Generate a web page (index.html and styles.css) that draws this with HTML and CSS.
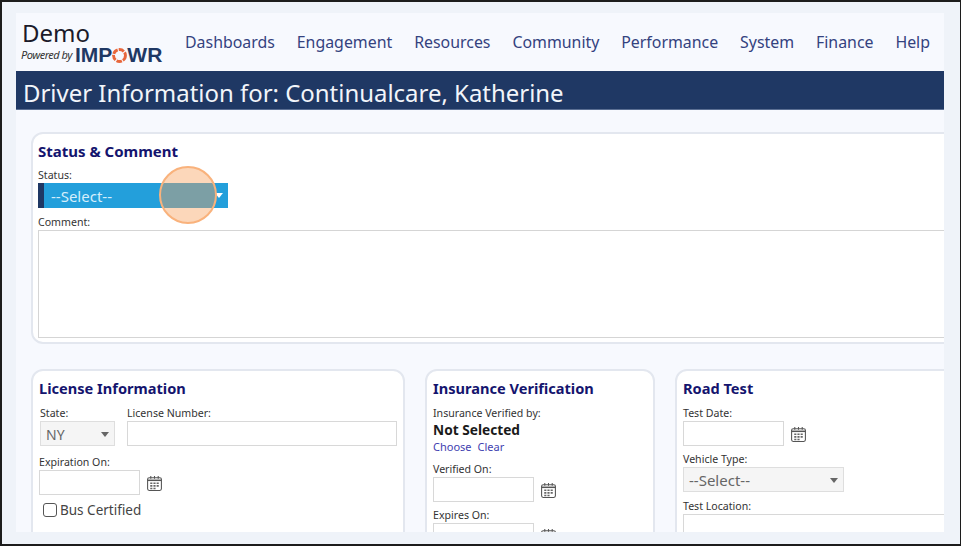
FILE: index.html
```html
<!DOCTYPE html>
<html lang="en">
<head>
<meta charset="utf-8">
<title>Driver Information</title>
<link rel="stylesheet" href="styles.css">
</head>
<body>
<div class="frame">
  <div class="app">
    <header class="top">
      <div class="brand">
        <div class="demo">Demo</div>
        <div class="powered"><span class="by">Powered by</span><span class="impowr">IMP<svg class="o" viewBox="0 0 20 20" aria-hidden="true"><circle cx="10" cy="10" r="7" fill="none" stroke="#e8673c" stroke-width="3.4" stroke-dasharray="6.5 1.3"/></svg>WR</span></div>
      </div>
      <nav class="nav">
        <a>Dashboards</a><a>Engagement</a><a>Resources</a><a>Community</a><a>Performance</a><a>System</a><a>Finance</a><a>Help</a>
      </nav>
    </header>
    <h1 class="title">Driver Information for: Continualcare, Katherine</h1>
    <main class="content">
      <section class="panel status">
        <h2>Status &amp; Comment</h2>
        <label class="lbl">Status:</label>
        <div class="status-select"><span>--Select--</span><i class="caret white"></i></div>
        <label class="lbl">Comment:</label>
        <div class="textarea"></div>
      </section>
      <div class="row">
        <section class="panel license">
          <h2>License Information</h2>
          <div class="pair">
            <div class="state-col">
              <label class="lbl indent">State:</label>
              <div class="select state"><span>NY</span><i class="caret"></i></div>
            </div>
            <div class="num-col">
              <label class="lbl">License Number:</label>
              <div class="input wide"></div>
            </div>
          </div>
          <label class="lbl">Expiration On:</label>
          <div class="date"><div class="input"></div><svg class="cal" viewBox="0 0 16 16" aria-hidden="true"><use href="#cal"/></svg></div>
          <div class="check"><span class="box"></span>Bus Certified</div>
        </section>
        <section class="panel insurance">
          <h2>Insurance Verification</h2>
          <label class="lbl">Insurance Verified by:</label>
          <div class="strong">Not Selected</div>
          <div class="links"><a>Choose</a><a>Clear</a></div>
          <label class="lbl">Verified On:</label>
          <div class="date"><div class="input"></div><svg class="cal" viewBox="0 0 16 16" aria-hidden="true"><use href="#cal"/></svg></div>
          <label class="lbl">Expires On:</label>
          <div class="date"><div class="input"></div><svg class="cal" viewBox="0 0 16 16" aria-hidden="true"><use href="#cal"/></svg></div>
        </section>
        <section class="panel road">
          <h2>Road Test</h2>
          <label class="lbl">Test Date:</label>
          <div class="date"><div class="input"></div><svg class="cal" viewBox="0 0 16 16" aria-hidden="true"><use href="#cal"/></svg></div>
          <label class="lbl">Vehicle Type:</label>
          <div class="select vehicle"><span>--Select--</span><i class="caret"></i></div>
          <label class="lbl">Test Location:</label>
          <div class="input long"></div>
        </section>
      </div>
    </main>
    <div class="spot"></div>
  </div>
</div>
<svg class="defs" aria-hidden="true">
  <symbol id="cal" viewBox="0 0 16 16">
    <rect x="1.5" y="2.5" width="13" height="12" rx="1.5" fill="#fff" stroke="#555"/>
    <path d="M1.5 5h13" stroke="#555" stroke-width="1.4"/>
    <path d="M4.5 1v2.5M8 1v2.5M11.5 1v2.5" stroke="#555"/>
    <path d="M4 7h2v1.5H4zM7 7h2v1.5H7zM10 7h2v1.5h-2zM4 9.5h2V11H4zM7 9.5h2V11H7zM10 9.5h2V11h-2zM4 12h2v1.3H4zM7 12h2v1.3H7z" fill="#666"/>
  </symbol>
</svg>
</body>
</html>
```
FILE: styles.css
```css
* { box-sizing: border-box; }
html, body { margin: 0; height: 100%; overflow: hidden; }
body { font-family: "Noto Sans", "Open Sans", sans-serif; color: #333; }
.frame {
  width: 961px; height: 546px;
  border: 2px solid #1c1c1c; border-right-width: 1px;
  background: #eff3f9;
  padding: 11px 16px 11px 14px;
}
.app { position: relative; width: 928px; height: 519px; background: #f7f9fe; overflow: hidden; }
.top { display: flex; align-items: flex-start; height: 58px; }
.brand { width: 169px; padding: 6px 0 0 5px; flex: none; }
.demo { font-size: 24px; line-height: 27px; color: #1b1b2a; padding-left: 1px; }
.powered { display: flex; align-items: center; height: 18px; }
.by { font-size: 11px; line-height: 14px; font-style: italic; color: #333; letter-spacing: -.5px; white-space: nowrap; flex: none; width: 54px; }
.impowr { display: flex; align-items: center; font-family: "Liberation Sans", sans-serif; font-weight: 700; font-size: 21px; line-height: 18px; color: #1f3864; letter-spacing: 0; }
.o { width: 17px; height: 17px; margin: 0 -1px; }
.nav { display: flex; gap: 21.9px; padding-top: 17px; font-size: 15.9px; line-height: 24px; color: #34427f; white-space: nowrap; }
.title { margin: 0; height: 39px; background: #1f3864; color: #f2f5fa; font-weight: 400; font-size: 23.95px; line-height: 43px; padding-left: 7px; border-bottom: 1px solid #5b6f93; white-space: nowrap; }
.content { padding: 22px 0 0 15px; width: 960px; }
.panel { background: #fff; border: 2px solid #e3e7ef; border-radius: 12px; padding: 7px 6px 0; }
.panel h2 { margin: 0; font-size: 14.6px; line-height: 20px; font-weight: 700; color: #14146e; white-space: nowrap; }
.status { height: 212px; margin-bottom: 25px; border-radius: 12px 0 0 12px; padding: 7px 5px 0; }
.status h2 { margin-bottom: 7px; font-size: 15px; }
.lbl { display: block; font-size: 10.6px; line-height: 15px; color: #333; white-space: nowrap; }
.status-select { position: relative; width: 190px; height: 25px; margin-bottom: 7px; background: #239fdb; border-left: 6px solid #1f3864; color: #d5eefb; font-size: 15px; line-height: 26px; padding-left: 7px; }
.caret { position: absolute; right: 5px; top: 10px; border: 4px solid transparent; border-top: 5px solid #666; border-bottom: 0; }
.caret.white { border-top-color: #fff; }
.textarea { width: 100%; height: 108px; border: 1px solid #d5d5d5; background: #fff; }
.row { display: flex; gap: 20px; align-items: flex-start; }
.license { width: 374px; height: 200px; }
.insurance { width: 230px; height: 200px; }
.road { width: 300px; height: 200px; }
.license h2, .insurance h2, .road h2 { margin-bottom: 8px; }
.pair { display: flex; gap: 12px; margin-bottom: 9px; }
.indent { padding-left: 1px; }
.input { width: 101px; height: 25px; border: 1px solid #d8d8d8; background: #fff; flex: none; }
.wide { width: 270px; }
.long { width: 280px; }
.select { position: relative; height: 25px; background: #f5f5f5; border: 1px solid #dedede; color: #666; font-size: 14px; line-height: 25px; padding-left: 5px; }
.state { width: 75px; margin-left: 1px; }
.vehicle { width: 161px; margin-bottom: 7px; font-size: 15px; }
.date { display: flex; align-items: center; gap: 6px; margin-bottom: 6px; }
.cal { width: 17px; height: 17px; flex: none; margin-top: 2px; }
.check { display: flex; align-items: center; gap: 3px; font-size: 13.5px; line-height: 20px; color: #444; padding-left: 4px; margin-top: -1px; }
.box { width: 14px; height: 14px; border: 1px solid #555; border-radius: 3px; background: #fff; }
.strong { font-size: 13.7px; line-height: 18px; font-weight: 700; color: #1a1a1a; }
.links { display: flex; gap: 6px; font-size: 11px; line-height: 16px; color: #3f3fb0; margin: 0 0 7px; }
.spot { position: absolute; left: 143px; top: 153px; width: 58px; height: 58px; border-radius: 50%; background: rgba(249, 160, 90, .42); border: 2px solid #f9b27c; }
.defs { position: absolute; width: 0; height: 0; }
```
